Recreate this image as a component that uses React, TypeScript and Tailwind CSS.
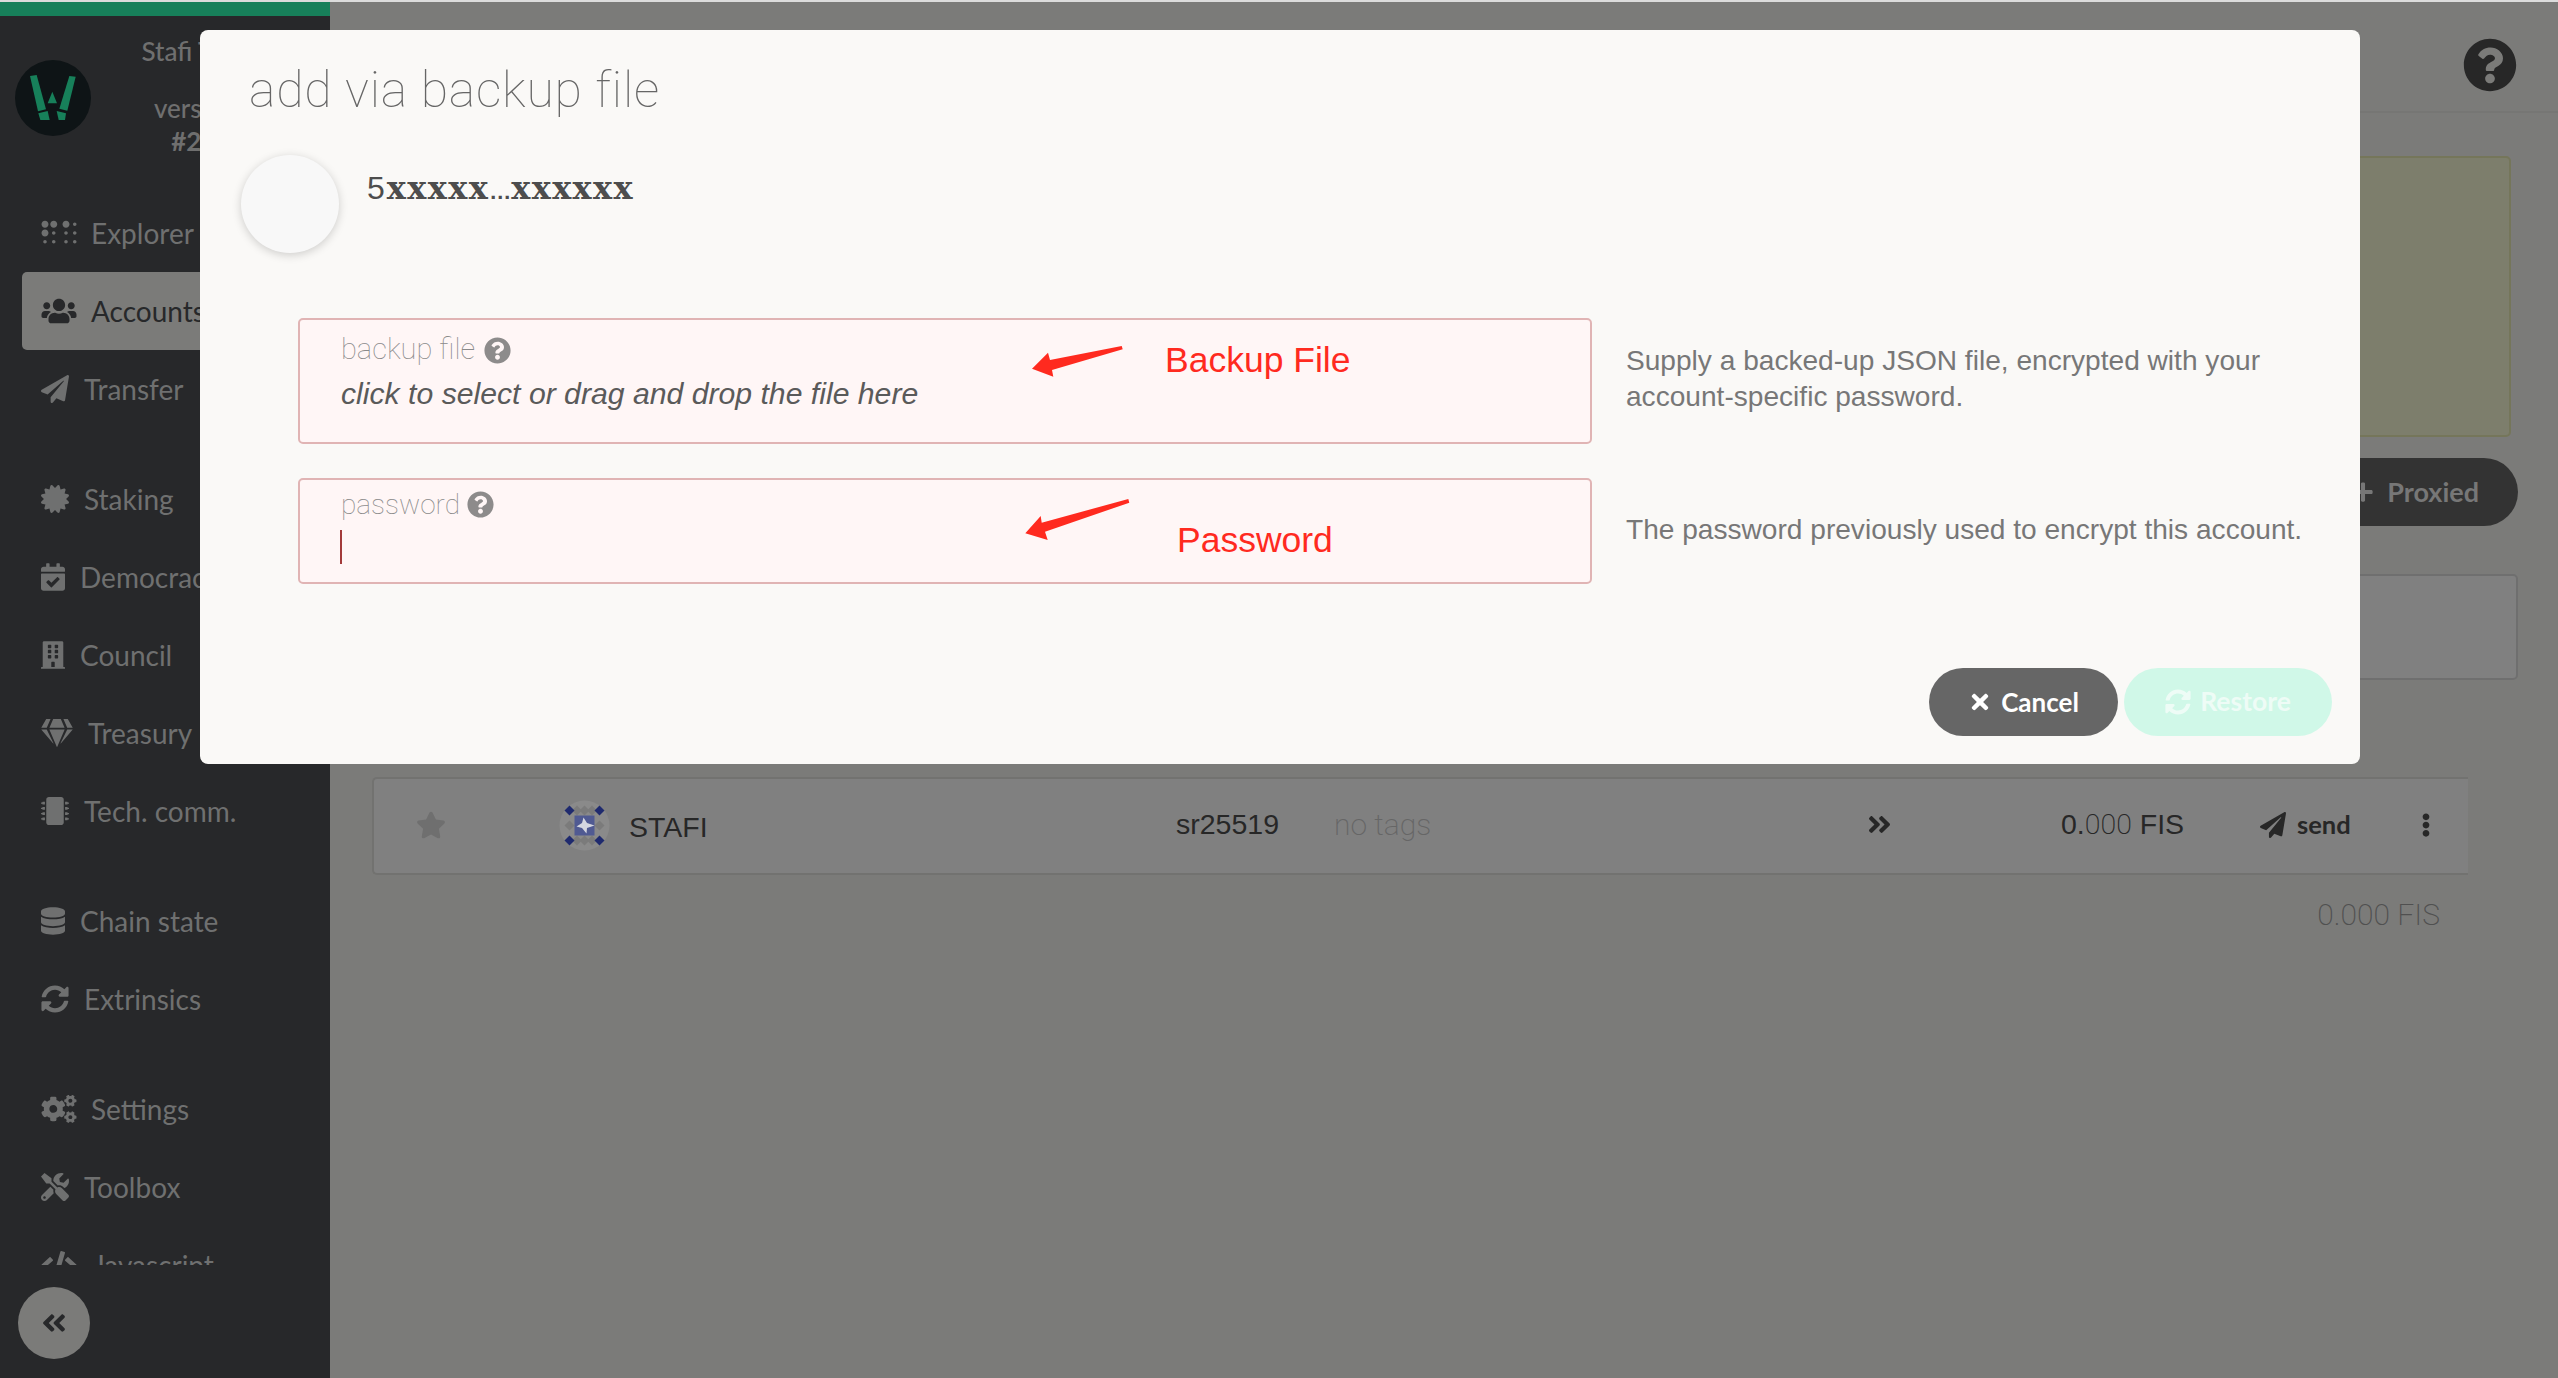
import React from "react";
import {
  FaBraille, FaUsers, FaPaperPlane, FaCertificate, FaCalendarCheck, FaBuilding, FaGem, FaMicrochip,
  FaDatabase, FaSyncAlt, FaCogs, FaTools, FaCode, FaAngleDoubleLeft, FaAngleDoubleRight, FaQuestionCircle,
  FaPlus, FaTimes, FaStar, FaEllipsisV,
} from "react-icons/fa";

type Item = { label: string; icon: React.ComponentType<any>; w: number; gap: number; active?: boolean; sep?: boolean };

const items: Item[] = [
  { label: "Explorer", icon: FaBraille, w: 36, gap: 14 },
  { label: "Accounts", icon: FaUsers, w: 36, gap: 14, active: true },
  { label: "Transfer", icon: FaPaperPlane, w: 28, gap: 15 },
  { label: "Staking", icon: FaCertificate, w: 28, gap: 15, sep: true },
  { label: "Democracy", icon: FaCalendarCheck, w: 24, gap: 15 },
  { label: "Council", icon: FaBuilding, w: 24, gap: 15 },
  { label: "Treasury", icon: FaGem, w: 32, gap: 15 },
  { label: "Tech. comm.", icon: FaMicrochip, w: 28, gap: 15 },
  { label: "Chain state", icon: FaDatabase, w: 24, gap: 15, sep: true },
  { label: "Extrinsics", icon: FaSyncAlt, w: 28, gap: 15 },
  { label: "Settings", icon: FaCogs, w: 36, gap: 14, sep: true },
  { label: "Toolbox", icon: FaTools, w: 28, gap: 15 },
  { label: "Javascript", icon: FaCode, w: 36, gap: 16 },
];

function Sidebar() {
  return (
    <aside className="w-[330px] shrink-0 bg-[#27282a] flex flex-col font-['Lato',sans-serif]">
      <div className="h-[14px] bg-[#17805a]" />
      <div className="h-[178px] flex items-start pl-[15px] pt-[44px]">
        <div className="w-[76px] h-[76px] rounded-full bg-[#0e1416] shrink-0">
          <svg viewBox="15 30 228 228" width={76} height={76}>
            <polygon points="60,78 80,75 108,178 84,184" fill="#17805a" />
            <polygon points="197,80 178,78 148,176 172,182" fill="#17805a" />
            <polygon points="127,125 141,160 113,160" fill="#17805a" />
            <polygon points="85,190 113,183 119,210 91,210" fill="#17805a" />
            <polygon points="140,183 168,190 165,210 146,210" fill="#17805a" />
          </svg>
        </div>
        <div className="w-[150px] ml-[46px] -mt-[25px] text-center text-[#6f6f6f] text-[26px] leading-[33px] font-medium whitespace-nowrap">
          <div className="mb-[24px]">Stafi Testnet</div>
          <div className="pl-[10px]">version 0.1</div>
          <div className="font-bold">#2,345</div>
        </div>
      </div>
      <nav className="h-[1071px] overflow-hidden flex flex-col">
        {items.map((it) => {
          const Icon = it.icon;
          return (
            <div key={it.label} className={it.sep ? "mt-[32px] shrink-0" : "shrink-0"}>
              <div
                className={
                  it.active
                    ? "h-[78px] ml-[22px] pl-[19px] flex items-center rounded-l-[5px] bg-[#7b7b79] text-[#27282a] text-[28px] whitespace-nowrap"
                    : "h-[78px] ml-[22px] pl-[19px] flex items-center text-[#6f7070] text-[28px] whitespace-nowrap"
                }
              >
                <Icon style={{ width: it.w, height: 28, marginRight: it.gap }} />
                <span>{it.label}</span>
              </div>
            </div>
          );
        })}
      </nav>
      <div className="pl-[18px] pt-[22px]">
        <div className="w-[72px] h-[72px] rounded-full bg-[#7b7b79] flex items-center justify-center text-[#27282a]">
          <FaAngleDoubleLeft size={28} />
        </div>
      </div>
    </aside>
  );
}

function Identicon() {
  const dots = [[12.5, 12.5], [42.5, 12.5], [12.5, 42.5], [42.5, 42.5]];
  const greys = [[27.5, 12.5], [12.5, 27.5], [42.5, 27.5], [27.5, 42.5], [20, 12.5], [35, 12.5], [20, 42.5], [35, 42.5]];
  return (
    <svg viewBox="0 0 55 55" width={55} height={55} className="shrink-0">
      <circle cx="27.5" cy="27.5" r="25" fill="#8a8a8a" />
      {greys.map(([x, y]) => (
        <polygon key={x * 100 + y} points={`${x},${y - 5} ${x + 5},${y} ${x},${y + 5} ${x - 5},${y}`} fill="#7b7b7b" />
      ))}
      <rect x="17.5" y="17.5" width="20" height="20" fill="#505a92" />
      <polygon points="26.5,19.5 30,25 37.5,27.5 30,30 29.5,35.5 25,30 19.5,28.5 25,25" fill="#d5d7e0" />
      {dots.map(([x, y]) => (
        <polygon key={x * 100 + y} points={`${x},${y - 5} ${x + 5},${y} ${x},${y + 5} ${x - 5},${y}`} fill="#1f2a6e" />
      ))}
    </svg>
  );
}

function Main() {
  return (
    <main className="flex-1 min-w-0 bg-[#7b7b79] font-['Liberation_Sans',sans-serif]">
      <div className="h-[111px] border-b-2 border-[#767674] flex items-center justify-end pr-[41px] pt-[16px]">
        <FaQuestionCircle size={54} className="text-[#272727]" />
      </div>
      <div className="h-[281px] mt-[43px] ml-[42px] mr-[47px] rounded-[5px] bg-[#7d7e6c] border-2 border-[#75765a]" />
      <div className="flex justify-end mt-[21px] mr-[40px]">
        <div className="h-[68px] w-[300px] pr-[39px] rounded-full bg-[#333333] text-[#777777] flex items-center justify-end gap-[13px] text-[27px] font-bold font-['Lato',sans-serif]">
          <FaPlus size={22} />
          <span>Proxied</span>
        </div>
      </div>
      <div className="h-[106px] mt-[48px] ml-[42px] mr-[40px] rounded-[5px] bg-[#808080] border-2 border-[#6f6f6f]" />
      <div className="h-[98px] mt-[97px] ml-[42px] mr-[90px] pb-[3px] bg-[#808080] border-y-2 border-l-2 border-[#727270] rounded-l-[5px] flex items-center text-[#272727] text-[28.5px]">
        <FaStar size={30} className="text-[#6f6f6f] ml-[42px] shrink-0" />
        <div className="ml-[111px] mt-[1px]">
          <Identicon />
        </div>
        <span className="ml-[17px] w-[547px] pt-[5px]">STAFI</span>
        <span className="w-[158px]">sr25519</span>
        <span className="w-[532px] text-[#666666] text-[30px] font-['Roboto',sans-serif] font-extralight">no tags</span>
        <FaAngleDoubleRight size={27} className="shrink-0" />
        <span className="ml-[168px] w-[199px] whitespace-nowrap">
          0.<span className="font-['Roboto',sans-serif] font-extralight">000</span> FIS
        </span>
        <FaPaperPlane size={26} className="shrink-0" />
        <span className="ml-[11px] font-bold font-['Lato',sans-serif] text-[25.5px]">send</span>
        <FaEllipsisV size={24} className="ml-[63px] shrink-0" />
      </div>
      <div className="mt-[22px] mr-[118px] text-right text-[30px] leading-[36px] text-[#505050] font-['Roboto',sans-serif] font-extralight">
        0.000 FIS
      </div>
    </main>
  );
}

function Arrow({ points }: { points: string }) {
  return (
    <svg viewBox="0 0 110 44" width={110} height={44} className="overflow-visible">
      <polygon points={points} fill="#ff2a1f" />
    </svg>
  );
}

function Modal() {
  const help = "text-[#8d8b8b] shrink-0";
  return (
    <div className="absolute left-[200px] top-[30px] w-[2160px] h-[734px] rounded-[8px] bg-[#faf9f7] font-['Liberation_Sans',sans-serif]">
      <div className="h-[120px] pl-[49px] flex items-center text-[50px] tracking-[0.75px] text-[#666666] font-['Roboto',sans-serif] font-thin">
        add via backup file
      </div>
      <div className="mt-[5px] ml-[41px] flex items-start">
        <div className="w-[98px] h-[98px] rounded-full bg-[#f8f8f8] shadow-[0_2px_10px_rgba(0,0,0,0.18)]" />
        <div className="ml-[28px] mt-[13px] text-[32px] leading-[40px] text-[#4d4d4d] flex items-baseline font-['DejaVu_Serif',serif]">
          <span className="font-['Liberation_Sans',sans-serif] mr-[2px]">5</span>
          <span className="font-bold tracking-[1.4px]">xxxxx</span>
          <span className="text-[22px] font-bold font-['Liberation_Sans',sans-serif]">…</span>
          <span className="font-bold tracking-[1.4px]">xxxxxx</span>
        </div>
      </div>
      <div className="mt-[65px] ml-[98px] flex items-start">
        <div className="relative w-[1294px] h-[126px] shrink-0 rounded-[5px] border-2 border-[#e0b4b4] bg-[#fff6f6] pl-[41px] pt-[14px]">
          <div className="flex items-center h-[32px] text-[29px] text-[#8a8a8a] font-['Roboto',sans-serif] font-thin">
            backup file
            <FaQuestionCircle size={27} className={`${help} ml-[9px]`} />
          </div>
          <div className="mt-[11px] text-[30.2px] leading-[34px] italic text-[#5a5a5a]">click to select or drag and drop the file here</div>
          <div className="absolute left-[732px] top-[25px]">
            <Arrow points="0,23.7 16,7.7 18,15 89.7,1 90.7,4.3 20,25 21.3,31.7" />
          </div>
          <div className="absolute left-[865px] top-[18px] text-[35.5px] leading-[44px] text-[#ff2a1f]">Backup File</div>
        </div>
        <div className="ml-[34px] mt-[25px] w-[690px] text-[28.1px] leading-[36px] text-[#777777]">
          Supply a backed-up JSON file, encrypted with your account-specific password.
        </div>
      </div>
      <div className="mt-[34px] ml-[98px] flex items-start">
        <div className="relative w-[1294px] h-[106px] shrink-0 rounded-[5px] border-2 border-[#e0b4b4] bg-[#fff6f6] pl-[41px] pt-[9px]">
          <div className="flex items-center h-[32px] text-[28px] text-[#8a8a8a] font-['Roboto',sans-serif] font-thin">
            password
            <FaQuestionCircle size={27} className={`${help} ml-[7px] -mt-[2px]`} />
          </div>
          <div className="mt-[9px] -ml-[1px] w-[2px] h-[34px] bg-[#a33a3a]" />
          <div className="absolute left-[724px] top-[18px]">
            <Arrow points="1.3,35.3 16.7,18 17.7,24.7 104.3,1 105.3,4.7 21,33.7 23.7,42" />
          </div>
          <div className="absolute left-[877px] top-[38px] text-[35.5px] leading-[44px] text-[#ff2a1f]">Password</div>
        </div>
        <div className="ml-[34px] mt-[34px] whitespace-nowrap text-[28.1px] leading-[36px] text-[#777777]">
          The password previously used to encrypt this account.
        </div>
      </div>
      <div className="mt-[84px] pr-[28px] flex justify-end gap-[6px] font-['Lato',sans-serif] font-bold text-[26px] text-white">
        <div className="w-[189px] h-[68px] rounded-full bg-[#666666] flex items-center justify-center gap-[9px]">
          <FaTimes size={24} />
          <span>Cancel</span>
        </div>
        <div className="w-[208px] h-[68px] rounded-full bg-[#d0f8e8] text-[#eefcf6] flex items-center justify-center gap-[9px]">
          <FaSyncAlt size={26} />
          <span className="text-[26.5px]">Restore</span>
        </div>
      </div>
    </div>
  );
}

export default function App() {
  return (
    <div className="relative w-[2558px] h-[1378px] overflow-hidden bg-[#7b7b79]">
      <div className="h-[2px] bg-[#dcdcdc]" />
      <div className="flex h-[1376px]">
        <Sidebar />
        <Main />
      </div>
      <Modal />
    </div>
  );
}
